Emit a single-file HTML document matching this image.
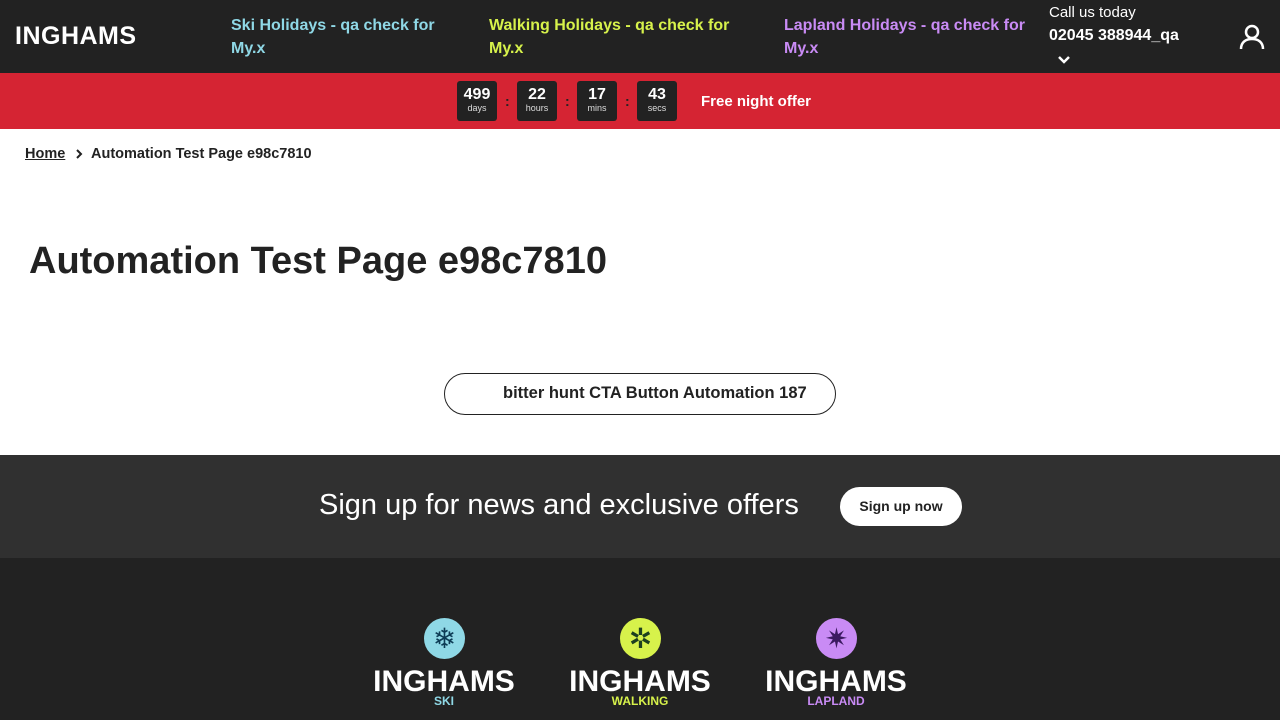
<!DOCTYPE html>
<html><head><meta charset="utf-8"><style>
*{margin:0;padding:0;box-sizing:border-box}
body{width:1280px;height:720px;overflow:hidden;font-family:"Liberation Sans",sans-serif;background:#fff;color:#222}
.hdr{position:absolute;top:0;left:0;width:1280px;height:73px;background:#222}
.logo{position:absolute;left:15px;top:22px;color:#fff;font-weight:bold;font-size:25px;letter-spacing:0.5px}
.nav{position:absolute;top:14px;font-weight:bold;font-size:16px;line-height:23px;width:220px}
.call{position:absolute;left:1049px;top:4px;color:#fff;font-size:15px}
.bar{position:absolute;top:73px;left:0;width:1280px;height:56px;background:#d52433}
.box{position:absolute;top:8px;width:40px;height:40px;background:#222;border-radius:3px;color:#fff;text-align:center}
.box b{display:block;font-size:16px;margin-top:6px;line-height:16px}
.box span{display:block;font-size:9px;color:#ddd}
.col{position:absolute;top:20px;color:#222;font-weight:bold;font-size:14px}
</style></head><body>
<div class="hdr">
<div class="logo">INGHAMS</div>
<div class="nav" style="left:231px;color:#8fd8e6">Ski Holidays - qa check for My.x</div>
<div class="nav" style="left:489px;color:#d7f24b;width:260px">Walking Holidays - qa check for My.x</div>
<div class="nav" style="left:784px;color:#c98bf5;width:250px">Lapland Holidays - qa check for My.x</div>
<div class="call">Call us today<br><b style="display:block;margin-top:6px;font-size:16px">02045 388944_qa</b></div>
<svg style="position:absolute;left:1056px;top:54px" width="16" height="12"><path d="M3 3l5 5 5-5" stroke="#fff" stroke-width="2.5" fill="none"/></svg>
<svg style="position:absolute;left:1239px;top:24px" width="26" height="26"><circle cx="13" cy="8" r="6" stroke="#fff" stroke-width="2.5" fill="none"/><path d="M2 25c0-7 5-10 11-10s11 3 11 10" stroke="#fff" stroke-width="2.5" fill="none"/></svg>
</div>
<div class="bar">
<div class="box" style="left:457px"><b>499</b><span>days</span></div><div class="col" style="left:505px">:</div>
<div class="box" style="left:517px"><b>22</b><span>hours</span></div><div class="col" style="left:565px">:</div>
<div class="box" style="left:577px"><b>17</b><span>mins</span></div><div class="col" style="left:625px">:</div>
<div class="box" style="left:637px"><b>43</b><span>secs</span></div>
<div style="position:absolute;left:701px;top:20px;color:#fff;font-weight:bold;font-size:15px">Free night offer</div>
</div>
<div style="position:absolute;left:25px;top:146px;font-size:14.5px;font-weight:bold"><u>Home</u></div>
<svg style="position:absolute;left:74px;top:148px" width="10" height="12"><path d="M3 2l4 4-4 4" stroke="#222" stroke-width="2" fill="none"/></svg>
<div style="position:absolute;left:91px;top:146px;font-size:14.5px;font-weight:bold">Automation Test Page e98c7810</div>
<div style="position:absolute;left:29px;top:240px;font-size:38px;font-weight:bold">Automation Test Page e98c7810</div>
<div style="position:absolute;left:444px;top:373px;width:392px;height:42px;border:1px solid #222;border-radius:21px;font-weight:bold;font-size:16.5px;padding:10px 0 0 58px">bitter hunt CTA Button Automation 187</div>
<div style="position:absolute;top:455px;left:0;width:1280px;height:103px;background:#303030">
<div style="position:absolute;left:319px;top:34px;color:#fff;font-size:29px">Sign up for news and exclusive offers</div>
<div style="position:absolute;left:840px;top:32px;width:122px;height:39px;background:#fff;border-radius:20px;font-weight:bold;font-size:14px;text-align:center;line-height:39px">Sign up now</div>
</div>
<div style="position:absolute;top:558px;left:0;width:1280px;height:162px;background:#222">
<div style="position:absolute;left:424px;top:60px;width:41px;height:41px;border-radius:50%;background:#8fd8e6;color:#0d3b55;text-align:center;font-size:28px;line-height:41px">❄</div>
<div style="position:absolute;left:620px;top:60px;width:41px;height:41px;border-radius:50%;background:#d7f24b;color:#1d4020;text-align:center;font-size:28px;line-height:41px">✲</div>
<div style="position:absolute;left:816px;top:60px;width:41px;height:41px;border-radius:50%;background:#c98bf5;color:#3b1a60;text-align:center;font-size:28px;line-height:41px">✷</div>
<div style="position:absolute;left:373px;top:107px;width:142px;text-align:center;color:#fff;font-weight:bold;font-size:30px">INGHAMS</div>
<div style="position:absolute;left:569px;top:107px;width:142px;text-align:center;color:#fff;font-weight:bold;font-size:30px">INGHAMS</div>
<div style="position:absolute;left:765px;top:107px;width:142px;text-align:center;color:#fff;font-weight:bold;font-size:30px">INGHAMS</div>
<div style="position:absolute;left:373px;top:136px;width:142px;text-align:center;color:#8fd8e6;font-weight:bold;font-size:12px">SKI</div>
<div style="position:absolute;left:569px;top:136px;width:142px;text-align:center;color:#d7f24b;font-weight:bold;font-size:12px">WALKING</div>
<div style="position:absolute;left:765px;top:136px;width:142px;text-align:center;color:#c98bf5;font-weight:bold;font-size:12px">LAPLAND</div>
</div>
</body></html>
